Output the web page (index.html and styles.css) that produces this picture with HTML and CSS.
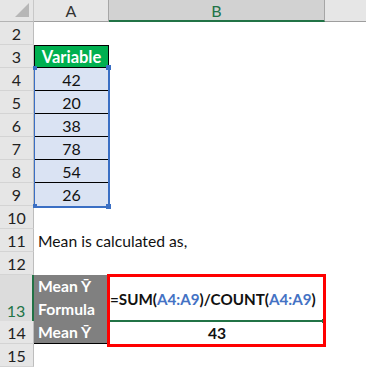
FILE: index.html
```html
<!DOCTYPE html>
<html lang="en">
<head>
    <meta charset="UTF-8">
    <meta name="viewport" content="width=device-width, initial-scale=1.0">
    <link rel="stylesheet" href="styles.css">
</head>
<body>
    <div class="sheet">
        <!-- column headers -->
        <div class="row head">
            <div class="corner"><span class="tri"></span></div>
            <div class="col-head">A</div>
            <div class="col-head active">B</div>
            <div class="col-head rest"></div>
        </div>

        <div class="row"><div class="rh">2</div><div class="c"></div><div class="c"></div><div class="c"></div></div>
        <div class="row"><div class="rh">3</div><div class="c title">Variable</div><div class="c"></div><div class="c"></div></div>
        <div class="row"><div class="rh">4</div><div class="c val">42</div><div class="c"></div><div class="c"></div></div>
        <div class="row"><div class="rh">5</div><div class="c val">20</div><div class="c"></div><div class="c"></div></div>
        <div class="row"><div class="rh">6</div><div class="c val">38</div><div class="c"></div><div class="c"></div></div>
        <div class="row"><div class="rh">7</div><div class="c val">78</div><div class="c"></div><div class="c"></div></div>
        <div class="row"><div class="rh">8</div><div class="c val">54</div><div class="c"></div><div class="c"></div></div>
        <div class="row"><div class="rh">9</div><div class="c val last">26</div><div class="c"></div><div class="c"></div></div>
        <div class="row"><div class="rh">10</div><div class="c"></div><div class="c"></div><div class="c"></div></div>
        <div class="row"><div class="rh">11</div><div class="c note">Mean is calculated as,</div></div>
        <div class="row"><div class="rh">12</div><div class="c"></div><div class="c"></div><div class="c"></div></div>
        <div class="row tall">
            <div class="rh sel">13</div>
            <div class="c label two">Mean Ȳ<br>Formula</div>
            <div class="c formula">=SUM(<span class="ref">A4:A9</span>)/COUNT(<span class="ref">A4:A9</span>)</div>
            <div class="c"></div>
        </div>
        <div class="row"><div class="rh">14</div><div class="c label bottom">Mean Ȳ</div><div class="c result">43</div><div class="c"></div></div>
        <div class="row"><div class="rh">15</div><div class="c"></div><div class="c"></div><div class="c"></div></div>

        <!-- highlighted data range A4:A9 -->
        <div class="range">
            <span class="hd tl"></span>
            <span class="hd tr"></span>
            <span class="hd bl"></span>
            <span class="hd br"></span>
        </div>

        <!-- active cell B13 -->
        <div class="active-cell"><span class="fill"></span></div>

        <!-- red box round the formula and result -->
        <div class="mark"></div>
    </div>
</body>
</html>
```

FILE: styles.css
```css
* {
    margin: 0;
    padding: 0;
    box-sizing: border-box;
}

:root {
    --head: #e6e6e6;
    --head-sel: #d2d2d2;
    --xl-green: #217346;
    --range: #3a6fc4;
}

body {
    background: white;
    font-family: Lato, "Open Sans", sans-serif;
    font-size: 15.7px;
    color: #111;
}

.sheet {
    position: relative;
    width: 366px;
    height: 368px;
    overflow: hidden;
}

.row {
    display: grid;
    grid-template-columns: 34px 75px 216px 1fr;
    height: 23px;
}

.row.head {
    height: 22px;
}

.row.tall {
    height: 46px;
}

/* header strip */
.corner {
    background: var(--head);
    border-right: 1px solid #c8c8c8;
    border-bottom: 1px solid #b4b4b4;
    position: relative;
}

.tri {
    position: absolute;
    right: 4px;
    bottom: 4px;
    width: 0;
    height: 0;
    border-left: 14px solid transparent;
    border-bottom: 14px solid #b7b7b7;
}

.col-head {
    background: var(--head);
    border-right: 1px solid #a6a6a6;
    border-bottom: 1px solid #9e9e9e;
    display: flex;
    align-items: center;
    justify-content: center;
    font-size: 16px;
    color: #333;
}

.col-head.active {
    background: var(--head-sel);
    border-bottom: 2px solid var(--xl-green);
    color: var(--xl-green);
}

.col-head.rest {
    border-right: none;
}

/* row numbers */
.rh {
    background: var(--head);
    border-right: 1px solid #bdbdbd;
    border-bottom: 1px solid #d4d4d4;
    display: flex;
    align-items: center;
    justify-content: center;
    font-size: 16px;
    color: #222;
}

.rh.sel {
    background: #dcdcdc;
    color: var(--xl-green);
    align-items: flex-end;
    padding-bottom: 1px;
    border-right: 2px solid var(--xl-green);
}

.c {
    display: flex;
    align-items: center;
    white-space: nowrap;
}

.title {
    background: #00b050;
    border: 1px solid #000;
    color: white;
    font-weight: bold;
    font-size: 16.5px;
    justify-content: center;
}

.val {
    background: #dae3f3;
    border-bottom: 1px solid #000;
    font-size: 16px;
    justify-content: center;
}

.val.last {
    border-bottom: none;
}

.note {
    grid-column: 2 / 5;
    padding-left: 4px;
}

.label {
    background: #808080;
    color: white;
    font-weight: bold;
    padding-left: 4px;
    border-right: 1px solid #000;
    border-bottom: 1px solid #000;
}

.label.two {
    line-height: 23px;
}

.formula {
    font-weight: bold;
    font-size: 15.2px;
    padding-left: 1px;
}

.ref {
    color: #4472c4;
}

.result {
    font-weight: bold;
    justify-content: center;
}

/* overlays */
.range {
    position: absolute;
    left: 34px;
    top: 68px;
    width: 76px;
    height: 140px;
    border-left: 1px solid var(--range);
    border-right: 2px solid var(--range);
    border-bottom: 2px solid var(--range);
}

.hd {
    position: absolute;
    background: var(--range);
}

.hd.tl { left: -2px; top: -2px; width: 4px; height: 4px; }
.hd.tr { right: -3px; top: -3px; width: 5px; height: 5px; }
.hd.bl { left: -2px; bottom: -2px; width: 4px; height: 4px; }
.hd.br { right: -3px; bottom: -3px; width: 5px; height: 5px; }

.active-cell {
    position: absolute;
    left: 110px;
    top: 320px;
    width: 214px;
    height: 2px;
    background: var(--xl-green);
}

.fill {
    position: absolute;
    right: -2px;
    top: -1px;
    width: 4px;
    height: 4px;
    background: var(--xl-green);
}

.mark {
    position: absolute;
    left: 107px;
    top: 274px;
    width: 219px;
    height: 73px;
    border: 3px solid #ff0000;
}
```
